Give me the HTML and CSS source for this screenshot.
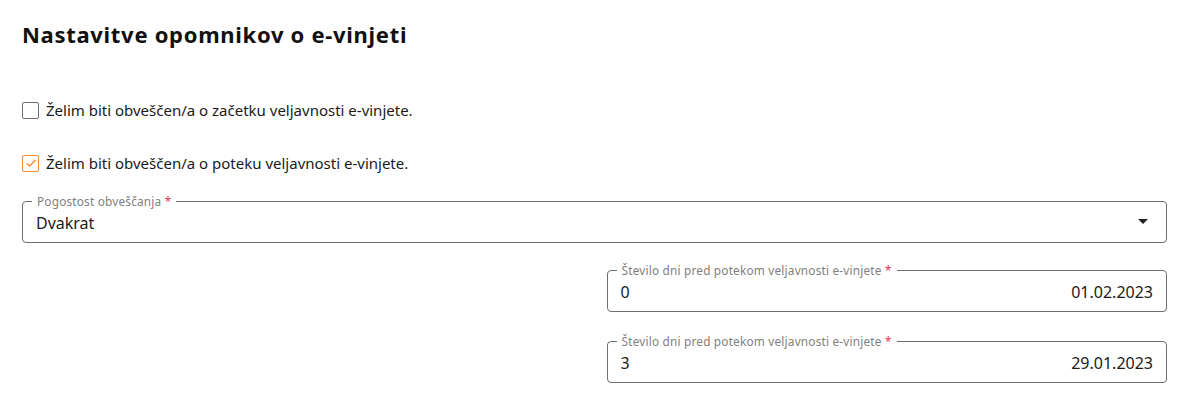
FILE: index.html
```html
<!DOCTYPE html>
<html>
<head>
    <title>Nastavitve opomnikov</title>
    <link rel="stylesheet" href="styles.css">
</head>
<body>
    <div class="settings">
        <h1>Nastavitve opomnikov o e-vinjeti</h1>

        <label class="check-row">
            <span class="check-box"></span>
            Želim biti obveščen/a o začetku veljavnosti e-vinjete.
        </label>
        <label class="check-row">
            <span class="check-box checked">
                <svg width="12" height="10" viewBox="0 0 12 10"><path d="M1.5 5.2 L4.6 8 L10.5 2" fill="none" stroke="#f58a30" stroke-width="1.3"/></svg>
            </span>
            Želim biti obveščen/a o poteku veljavnosti e-vinjete.
        </label>

        <div class="field select-field">
            <span class="field-label">Pogostost obveščanja <span class="req">*</span></span>
            <span class="field-value">Dvakrat</span>
            <span class="arrow"></span>
        </div>

        <div class="days">
            <div class="field">
                <span class="field-label">Število dni pred potekom veljavnosti e-vinjete <span class="req">*</span></span>
                <span class="field-value">0</span>
                <span class="field-date">01.02.2023</span>
            </div>
            <div class="field">
                <span class="field-label">Število dni pred potekom veljavnosti e-vinjete <span class="req">*</span></span>
                <span class="field-value">3</span>
                <span class="field-date">29.01.2023</span>
            </div>
        </div>
    </div>
</body>
</html>
```

FILE: styles.css
```css
body {
    margin: 0;
    font-family: 'Noto Sans', 'Open Sans', sans-serif;
    color: #1a1a1a;
    background: #fff;
}

.settings {
    padding: 16px 33px 0 22px;
}

h1 {
    margin: 0 0 49px 0;
    font-size: 22px;
    font-weight: bold;
    letter-spacing: 0.7px;
    line-height: 36px;
    color: #111;
}

.check-row {
    display: flex;
    align-items: center;
    gap: 7px;
    font-size: 15px;
    height: 20px;
    margin-bottom: 33px;
}

    .check-row:first-of-type {
        margin-top: -1px;
    }

.check-box {
    width: 15px;
    height: 15px;
    border: 1.5px solid #6e6e6e;
    border-radius: 2px;
    display: flex;
    align-items: center;
    justify-content: center;
}

    .check-box.checked {
        border-color: #f58a30;
    }

.field {
    position: relative;
    height: 40px;
    border: 1px solid #6e6e6e;
    border-radius: 4px;
    display: flex;
    align-items: center;
    padding: 0 13px;
    font-size: 16px;
}

.select-field {
    margin-top: -5px;
}

.field-label {
    position: absolute;
    top: -9px;
    left: 9px;
    padding: 0 5px;
    background: #fff;
    font-size: 11.8px;
    color: #808080;
    letter-spacing: 0.2px;
    line-height: 16px;
}

    .field-label .req {
        color: #e8344a;
    }

.field-value {
    flex: 1;
    margin-top: 2px;
}

.field-date {
    margin-top: 2px;
}

.arrow {
    position: absolute;
    right: 18px;
    top: 17px;
    border-left: 5px solid transparent;
    border-right: 5px solid transparent;
    border-top: 5px solid #222;
}

.days {
    display: grid;
    grid-template-columns: 1fr 1fr;
    column-gap: 24px;
    row-gap: 29px;
    margin-top: 27px;
}

    .days .field {
        grid-column: 2;
    }
```
